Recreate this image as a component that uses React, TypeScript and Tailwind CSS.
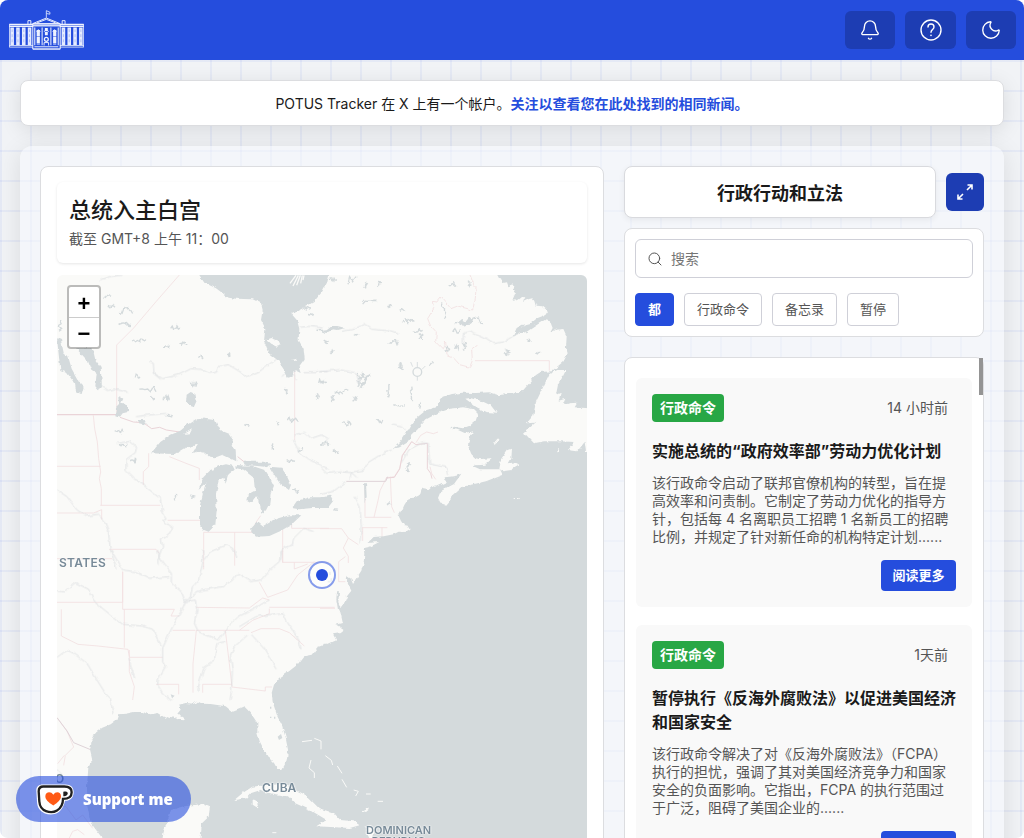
import { Bell, Moon, Search } from "lucide-react";

const FILTERS = [
  { label: "都", active: true },
  { label: "行政命令", active: false },
  { label: "备忘录", active: false },
  { label: "暂停", active: false },
];

const ACTIONS = [
  {
    id: "workforce",
    type: "行政命令",
    time: "14 小时前",
    title: "实施总统的“政府效率部”劳动力优化计划",
    body: "该行政命令启动了联邦官僚机构的转型，旨在提高效率和问责制。它制定了劳动力优化的指导方针，包括每 4 名离职员工招聘 1 名新员工的招聘比例，并规定了针对新任命的机构特定计划......",
  },
  {
    id: "fcpa",
    type: "行政命令",
    time: "1天前",
    title: "暂停执行《反海外腐败法》以促进美国经济和国家安全",
    body: "该行政命令解决了对《反海外腐败法》（FCPA）执行的担忧，强调了其对美国经济竞争力和国家安全的负面影响。它指出，FCPA 的执行范围过于广泛，阻碍了美国企业的......",
  },
];

// small lakes: x, y, width, height in map units
const LAKES = [
  [145, 75, 20, 12], [155, 105, 22, 10], [192, 112, 38, 20], [188, 158, 34, 16], [232, 206, 38, 10],
  [344, 166, 28, 14], [374, 216, 20, 8], [324, 226, 16, 8], [424, 256, 18, 8], [516, 250, 8, 10],
  [238, 312, 14, 12], [250, 350, 50, 16], [404, 336, 20, 12], [320, 376, 20, 14], [286, 376, 10, 14],
  [190, 512, 24, 16], [226, 566, 14, 12], [176, 476, 26, 16], [406, 672, 10, 18], [354, 674, 8, 14],
  [330, 434, 18, 8], [686, 358, 8, 12], [694, 438, 30, 16], [662, 456, 8, 10], [692, 568, 28, 8],
  [724, 530, 16, 14], [776, 370, 14, 18], [788, 326, 18, 14], [744, 110, 20, 8], [756, 130, 14, 6],
  [646, 520, 5, 20], [714, 656, 12, 14], [566, 462, 14, 8], [780, 176, 26, 14], [4, 150, 14, 34],
  [820, 20, 22, 14], [876, 20, 28, 20], [926, 36, 10, 16], [962, 34, 16, 16], [920, 90, 44, 14],
  [992, 102, 12, 10], [1032, 116, 14, 12], [1038, 142, 34, 16], [1070, 176, 30, 14], [1088, 190, 14, 18],
  [998, 206, 30, 26], [806, 210, 12, 12], [822, 240, 10, 8], [898, 190, 6, 6], [1178, 38, 22, 12],
  [1234, 32, 10, 16], [1236, 140, 46, 26], [1196, 150, 34, 18], [1156, 100, 14, 46], [1190, 174, 20, 16],
  [1170, 228, 14, 16], [1196, 226, 16, 12], [1220, 216, 12, 26], [1028, 280, 12, 16], [1120, 276, 12, 14],
  [1060, 350, 14, 46], [1012, 402, 34, 14], [994, 342, 8, 40], [1090, 396, 8, 20], [906, 310, 40, 22],
  [902, 330, 18, 20], [860, 350, 20, 16], [828, 376, 12, 16], [796, 330, 16, 10], [858, 450, 28, 18],
  [960, 448, 20, 14], [796, 510, 24, 20], [834, 540, 14, 12], [1048, 592, 8, 16],
  [1056, 578, 8, 12], [990, 698, 12, 8], [1204, 670, 8, 6], [832, 716, 14, 6], [1414, 208, 8, 8],
  [1440, 244, 12, 8], [836, 366, 24, 8], [890, 380, 12, 14], [1344, 236, 16, 18],
];

// irregular zigzag inside the lake's box, stable for a given index
function lakePath(lake: number[], i: number) {
  const [x, y, w, h] = lake;
  let seed = i * 7919 + 13;
  const next = () => {
    seed = (seed * 16807) % 2147483647;
    return (seed % 1000) / 1000;
  };
  const points = Array.from({ length: 7 }, (_, n) =>
    w > h ? [x + (w * n) / 6, y + h * next()] : [x + w * next(), y + (h * n) / 6],
  );
  return "M" + points.map((p) => `${p[0].toFixed(1)} ${p[1].toFixed(1)}`).join("L");
}

function Logo() {
  const bays = [26, 44, 62, 80, 185, 203, 221, 239];
  return (
    <svg viewBox="24 28 231 124" className="h-10 w-[77px]" fill="none" stroke="#eef2ff" aria-hidden="true">
      <path d="M139 52V30l11 5v6l-10-2" strokeWidth="2.5" />
      <path d="M24 73h74M181 73h74M24 79h74M181 79h74" strokeWidth="4" />
      <path d="M24 138h74M181 138h74M24 143h74M181 143h74M25 72v71M254 72v71" strokeWidth="2.5" />
      <path d="M82 72V61h9v11M188 72V61h9v11M97 70l42-17 42 17zM110 68l29-11 29 11M97 70v79h85V70M97 149h85" strokeWidth="3" />
      <path d="M97 76h85" strokeWidth="7" opacity="0.85" />
      {bays.map((x) => (
        <g key={x}>
          <path d={`M${x + 7} 82v55`} stroke="#e6ecff" strokeWidth="11" />
          <path d={`M${x + 7} 88v8M${x + 7} 103v9M${x + 7} 119v9`} stroke="#aebff6" strokeWidth="3" />
        </g>
      ))}
      <path d="M103 82v55M176 82v55M126 82v55M153 82v55" strokeWidth="4" opacity="0.8" />
      <path d="M114 90v46M165 90v46" strokeWidth="10" strokeDasharray="20 2" />
      <path d="M139 84v22" strokeWidth="9" strokeDasharray="10 2" />
      <path d="M109 96q5-14 11 0M159 96q5-14 11 0M132 96q7-14 14 0" strokeWidth="2.5" />
      <circle cx="139" cy="119" r="6" strokeWidth="4" />
      <path d="M132 138v-9h14v9M102 142h74" strokeWidth="3" />
    </svg>
  );
}

function HelpIcon() {
  return (
    <svg viewBox="0 0 24 24" className="size-6" fill="none" stroke="currentColor" strokeWidth="1.4" strokeLinecap="round" strokeLinejoin="round" aria-hidden="true">
      <circle cx="12" cy="12" r="10" />
      <path d="M9 9a3 3 0 0 1 6 0c0 2.4-3 2.6-3 5.2" />
      <path d="M12 17.4v.1" strokeWidth="1.6" />
    </svg>
  );
}

function ExpandIcon() {
  return (
    <svg viewBox="0 0 16 16" className="size-4" fill="none" stroke="white" strokeWidth="1.6" aria-hidden="true">
      <path d="M10.500 1h4.500v4.500M15 1L10 6M5.500 15H1v-4.500M1 15l5-5" />
    </svg>
  );
}

function CupIcon() {
  return (
    <svg viewBox="106 68 114 98" className="h-[33px] w-[38px]" aria-hidden="true">
      <path d="M126 72h68c17 0 25 9 25 23 0 15-10 26-26 26-3 15-9 28-22 36-10 6-25 7-38 2-15-6-23-18-24-35l-2-35c0-10 7-17 19-17z" fill="white" />
      <path d="M128 78h63c14 0 22 5 22 17s-9 20-26 20c0 15-6 28-18 35-8 5-22 6-33 2-13-5-19-15-20-29l-2-31c0-9 5-14 14-14z" fill="white" stroke="#202020" strokeWidth="7" />
      <path d="M188 94c10-3 14 0 13 6-1 5-6 8-13 7z" fill="#202020" />
      <path d="M158 135c-15-10-24-18-24-28 0-13 17-16 24-4 7-12 23-9 23 4 0 10-9 18-23 28z" fill="#ff5a16" />
    </svg>
  );
}

function MapTiles() {
  return (
    <svg viewBox="3 15 1590 1800" preserveAspectRatio="xMinYMin slice" className="block h-[600px] w-full" aria-hidden="true">
      <defs>
        <filter id="coast" filterUnits="userSpaceOnUse" x="-20" y="-20" width="2000" height="1880" colorInterpolationFilters="sRGB">
          <feTurbulence type="fractalNoise" baseFrequency="0.06" numOctaves="2" seed="4" />
          <feDisplacementMap in="SourceGraphic" scale="12" xChannelSelector="R" yChannelSelector="G" />
        </filter>
        <filter id="stream" filterUnits="userSpaceOnUse" x="-20" y="-20" width="2000" height="1880" colorInterpolationFilters="sRGB">
          <feTurbulence type="fractalNoise" baseFrequency="0.05" numOctaves="2" seed="9" />
          <feDisplacementMap in="SourceGraphic" scale="12" xChannelSelector="R" yChannelSelector="G" />
        </filter>
      </defs>
      <rect x="0" y="0" width="3000" height="1830" fill="#fafaf8" />

      {/* state and country lines */}
      <g fill="none" stroke="#f2e0e1" strokeWidth="2.5">
        <path d="M370 15L300 95 232 175 182 225V432M112 436l4 40 8 40 4 50 6 40-4 20 6 30v50M3 589h131M3 729h110l24-10v30M133 706h180M335 751h108M443 787v50M443 787h145M536 787v100M160 838h140l10 12M278 550v40l-16 15v40M340 560l50 20 40 15v35M680 778v100M707 740v35h112M586 787l14-30 14-20" />
        <path d="M3 866h165M443 838v60" />
        <path d="M716 300v210" />
        <g transform="translate(792 0)">
          <path filter="url(#stream)" d="M450 15l10 25 8 10-2 35-8 35-45-12-20 8-30-35-12 15-14-2 4 22-18 30 8 20 18 20-2 30 20 20 10-20 4 40 20 8 18 20 30 8 8-20-2-35 15-12" />
          <path d="M465 272h223v30" />
          <path d="M288 518l14-22 18-10 20 5 14-5M275 515l-28 40-8 40-16 25-24 4M330 590l5 20 12 18M200 622l-20 40-6 30-12 50M211 620l4 90 8 18M134 742h80M127 773h75M186 773v30M128 773v40M135 640v100M0 776h65l20 28 30 20M85 804l-15 30 15 25 0 20" />
        </g>
        <g transform="translate(0 840)">
          <path d="M3 157h197V65M200 65v113h155l-10 20h25M205 178v115M16 178v80l50 25 60 5 90 10 4 22M220 322h100M220 300v65l15 45-5 40M350 241h68M300 403h68v30M421 241l-10 100v87M420 172l160 2M420 241h160M508 241l12 100 8 70M440 403h88M440 403v25M528 411l100 12v-12h20M580 174l40-30 20 6M640 172H836M550 241l40-30 50-20v-15M585 248l30-12h55l30 12 45 40M680 0v37h140M610 97l25 45 60-22 30-45 50-40M715 37v20l40-15M3 503l30 40 20 48-25 25-5 30M25 616l-20 25" />
          <path d="M792 175h45M848 35v60h20M848 35l20-15M345 810l40-15 50-25M375 800l20 35M40 864l10-20 15-5 20 15M0 760l30 10 30 40 20-15 30 40" />
        </g>
      </g>
      <g fill="none" stroke="#ead4d8" strokeWidth="3">
        <path d="M3 434h177" strokeWidth="4" />
        <path d="M192 442l40 14 30 2 25 18 24-4 20 8 40 6M545 560l20 16" />
        <path d="M1067 515l-28 42-8 40-16 25-24 2M1067 515l13 9 34-4v76l10 14 4 16" />
        <path d="M871 634h118l6-14M3 1343l30 40 20 35 58 24" stroke="#dfd3d8" />
      </g>

      {/* rivers */}
      <g fill="none" stroke="#dcdfe1" strokeWidth="2.5" strokeLinejoin="round" filter="url(#stream)">
        <path d="M280 275l12 5 2 30 26 16 50-12 35-18 30 2 25 12 22-4 5-16 30-6 30 18 26 18 40-18 30-22 42-26M134 30l28-10 38-5M314 328l-24-20M240 440l40-5 50-5M182 520l40-6 20 16-4 18-28 20v34l25 25 30 15M262 645l50 40 8 40 10 20-10 6 30 22-14 24-20 12 4 20-14 38 0 15M3 660l30 20 30 40 30 18 32-5 20 20 12 30 6 55 20 60M712 510l20 40 20 15 40 20 27 12M730 172l30-3 40 5M742 305h70M716 495l30-8 20 18 30-10 20 10M443 870l20-25 50-20 20 10 10 30M675 870l4-35 30-10 4-20 30-30 30 10M135 350l20 12 20-5 40 10M678 320l10-12h24l6 22" />
        <g transform="translate(792 0)">
          <path d="M0 305l60-6 50 10 6 30M65 184l30-5 40-16 20 15 50 4 30 10M430 230v-40l20-5 50 24 20 12 30-5 50-30M215 462l30 6 12 12M215 540l-30 12-40 25-15 24-35 5-5 20M0 590l20 20 45-4 30 2 15 14M0 674l40-10 40-30M325 522l4 60 50 10 4 20M105 680l15 30 4 60-4 50M328 522l-20-4-40 20-24 40" />
        </g>
        <g transform="translate(0 840)">
          <path d="M165 0l35 60 40 5 40 20 60-5M305 0l6 25 35 45v30l30 25 12 30-8 20-30 55-15 30-15 35v40l8 15-20 35-3 20 15 25 28 20M675 0l-5 35-30 25-25 30-30 5-40-25-15 20-30 20-60 10-20 5-10 15-24 12M440 0v40l-12 50-18 20-10 45M388 155l30-5 5 30-8 40 12 25 60 25 30-40 30-30 50-25 40-25M3 122l20 4 35-28 40 20 20 40 50 40 32 25 60 5 30 10 20 40 8 10M3 322l30-22 20 10 40 30 30 50 25 40 15 15 8 45M508 275l-25 5-8 50-30 20-15 50-5 25M575 255l-40 35-12 30 6 40-2 60-5 30M585 252l40 45 35 60M550 230l50-30 80-12 15 30 35 55 5 25M218 325l18 60" />
          <path d="M0 656l20 20M120 785h30" />
        </g>
      </g>

      <g filter="url(#coast)">
        {/* ocean */}
        <path
          fill="#d4dadc"
          d="M1327 15l6 12 6-4 2 16 12-2 4 12 16-6-3 14 10 8-8 18 2 9 14-3 10-8 10 1-7 14 18-9 10-2 6 8 4 14 20 2 17 14-8 12-25 10-22 18-18 4-18 25 26-6 30-20 25-16 16 4 8 20-8 15 18-10 22-2 10 22-2 35 5 16-12 24-24 20-12 10-33 2-15 10-18 22-22 26-14 5-55 6-30-8-40 2-40-1-35 4-25 8-12 17-8 14-30 10-25 20-22 26-15 26-15 22-20 20 18-3 22-14 14-22 18-18 26-30 36-20 36-12 38-4 30 5 15 15-7 20-18 15-20 8-30-5-8 6 23 4 20 9 25-5-10 18-5 25 10 25 15 15 15 8-25 15-25 17-25 10-20 3-15 2 3 15-23 10-8 4-10-4-10 10-20-4-7 22-16 8-17 2-13 20-7 16-10 17 7 15 8 12 18 3-3-10-7 3 10 17-13 8-20-1-15 8-30 6-30 2-15 14-15 16 2 22-2 24-7 25-13 20-12 17-5-12-15-10 5 25 10 20-13 17-12 28-6 8-8-18 2-30-6 0-2 22 5 30 10 17 5 23-20 5 18 12-3 13-25 4 10 18-30 13h-7l-20 8-17 22-23 5-20 25-25 20-30 20-15 20-7 25 4 30 13 40 15 30 10 35 7 35-4 35-13 23h-15l-10-18-15-15-15-25-13-25-7-25v-30l-20-30-20-20-20 8-17 7-18-15-20-3-25-4-25-1-15-7-10 7-25-2-20 5 5 15-10 12 15 8 8 12-12-1-21-11-15 9-15-7-20-12-20 4-25-7h-25l-25 5-20 2-5 15-20 15-25 10-20 15-12 25-5 25 7 30-12 25-4 55 1 60 10 50 30 40 20 50v40H3000V-15H1320z"
        />
        {/* hudson bay and the great lakes */}
        <g fill="#d4dadc">
          <path d="M420 0l25 38 35 17 38 28 22 3 50 2 25 12 5 20-5 30 13 25-4 38 16 38 25 20 20 30 12 22 12-4 8-18 17 8-6-18 18-25-3-30-15-25 2-35-7-25-17-20 32-15 35-20 25-30 16-30 6-25z" />
          <path d="M792 0h27l-12 43-18 18zM60 235h50l8 34 16 22 4 60-10 10-10-12 4-40-16-10-10-25z" />
          <path d="M3 205l12 5 8 38 14 14 10 34 22 40 14 14-6 22-16-4-4-26-24-34-20-8z" />
          <path d="M285 550l28-34 32-22 28-12 24-20 28-18 52 6 14 30 30 12 10 14-4 22 12 14 2 32-25-12-16-8-20 8-20-2-14-12-20-4-16 6 16-26-40 10-30 18-26-1z" />
          <path d="M428 656l14-34 24-24 4 4-12 30zM446 650l14-32 20-28 30-7 20 4 6 12-20 16-8 26-6-18-14 8-8 40 2 50-4 44-20 20-14-5-12-15 0-60z" />
          <path d="M538 585l50 2 40 14 14 22 12 24-10 24-4 30-10 20-14 10-6-42-10-10-14 18-12-6 5-18 18-10-4-40-30-24-24-6zM640 590l36 3 14 20 15 32-6 15-28-20-16-26zM562 575h60l24 8-20 7-60-6z" />
          <path d="M586 775l18-20 16 14 30-18 50-15 36 0-30 28-34 20-32 14-40 2-14-14zM708 714l14-20 40-12 57 0v32l-50 0-40 4zM792 682l30-8 10 18-14 18-26 4z" />
          <path d="M392 374l12-8 14 6 4 20-8 18-16-4-8-14zM190 378l12 8-6 12 20 8v20l-16 4-8 10-14-6 2-20 12-12zM244 450l22 0 6 14-20-4zM792 180l20-2 12-10 20 0 24 6-22 6-14-2-16 8-24-2z" />
          <path d="M1370 200l12-26 22-12-8 18zM1204 158l14-10 12 6 10-12 8 10-6 12-18 2zM916 342l14-22 14-10-20 34-14 12zM1052 800l6-16 4 12zM924 640l6 0 2 40-6 20z" />
        </g>
        <g fill="none" stroke="#d4dadc" strokeWidth="4">
          {LAKES.map((lake, i) => (
            <path key={i} d={lakePath(lake, i)} />
          ))}
        </g>

        {/* islands */}
        <g fill="#fafaf8">
          <path d="M630 210l16-6 22 8 6 14-14 4-14-6zM384 492l24-14-6 12zM708 270l14-4-4 8z" />
          <path d="M1228 386l14-2 36 10 26 12 18 22-30-2-30-14zM1236 536l10 24 24 8 40-4-22 20-30 2-16-14-12-14zM1314 520l10-14 8 0-10 10-6 10z" />
          <path d="M1214 614l10-22 18-8 30 14 60 0 8 16-50 20-70 16-30 28-22 26-14-4-8-16 8-20 40-22z" />
          <path d="M1330 596l6-30 16-24 16-6-2 30-8 14 26-4 2 12-20 12-26 4z" />
          <path d="M1404 488l16-14 18-16-26 2 20-24 8-40 24-50 16-34 24-12 26 0-10 20-14 24-6 30 14-6-6 24 20-6-8 20 20-6 24-2-8 14 58 4 4 130-28 0-4-30-22 28-28-4 20-24-42-2-50 0-30 6z" />
          <path d="M904 832l20-12 46-4-28 14-34 8zM896 838l10-6 0 6zM1376 684h12v3h-12zM1504 534h5v10h-5z" />
          <path d="M535 1590l24-20 30-20 40-5 40-5 20 5 60 30 40 40 46 15 18 20 40 4 18 12-30 8-100-5 30-20-50-30-45-20-20-20-60-10-20-10-30 10-14 16zM590 1590l20 10-8 12-12-8z" />
          <path d="M345 1620l45-12 50-6 22 8-4 30-20 20-6 60-10 100-120 0 20-130zM925 1670l20-4 10 10-10 40zM915 1625l12-6 8-12 4 12-12 10z" />
        </g>
      </g>
      <path d="M720 16l-18 24M727 16l-16 32M733 16l-11 30M739 16l-5 24M744 16l-3 14" stroke="#fafaf8" strokeWidth="4" />
      <circle cx="1084" cy="306" r="13" fill="none" stroke="#d4dadc" strokeWidth="4" />
      <path d="M1070 290l-6-14M1084 292v-16M1098 298l10-10M1084 320v12" stroke="#d4dadc" strokeWidth="2.5" />
      <g fill="none" stroke="#fafaf8" strokeWidth="3">
        <path d="M738 1415l30-4M775 1405l20 8v25M765 1470l-6 24 16 14v16M808 1457l18 14 4 14M844 1488l14 22M858 1528l14 24M893 1560l14 4-8 14M930 1572h14M965 1594h16M649 1688h12M848 1018l6 18-8 16M1315 520l10-12" />
      </g>
      <path d="M665 1400l10-8 4 12-10 6zM344 1273l12 4-8 8zM642 1310h4v6h-4zM654 1340h4v6h-4zM642 1340h4v4h-4z" fill="#d4dadc" />
      <path d="M822 905v10M826 925v10M815 935h8" stroke="#d4dadc" strokeWidth="5" />
    </svg>
  );
}

function MapPanel() {
  return (
    <section className="min-w-0 rounded-lg border border-[#dcdde0] bg-white p-4 pt-[15px]">
      <div className="rounded-md p-3 shadow-[0_1px_3px_rgba(0,0,0,0.1)]">
        <h2 className="text-[22px] leading-8 font-medium text-[#1a1a1a]">总统入主白宫</h2>
        <p className="text-sm leading-[25px] text-[#555]">截至 GMT+8 上午 11：00</p>
      </div>
      <div className="relative mt-3 overflow-hidden rounded-md">
        <MapTiles />
        <div className="absolute top-[10px] left-[10px] flex w-[34px] flex-col overflow-hidden rounded-sm border-2 border-black/25 bg-white bg-clip-padding font-['Liberation_Sans',sans-serif] text-[22px] font-bold text-black">
          <button aria-label="Zoom in" className="flex h-[31px] items-center justify-center border-b border-[#ccc] pt-0.5">
            <span aria-hidden="true">+</span>
          </button>
          <button aria-label="Zoom out" className="flex h-[29px] items-center justify-center pt-0.5">
            <span aria-hidden="true">−</span>
          </button>
        </div>
        <span className="absolute top-[286px] left-[251px] flex size-7 items-center justify-center rounded-full border-2 border-[#254ddd]/55 bg-white/60">
          <span className="size-3 rounded-full bg-[#254ddd]" />
        </span>
        <span className="absolute top-[280px] left-[2px] text-[12px] leading-4 font-semibold tracking-wide text-[#778a98] [text-shadow:0_0_2px_#fff]">STATES</span>
        <span className="absolute top-[505px] left-[205px] text-[12px] leading-4 font-semibold text-[#778a98] [text-shadow:0_0_2px_#fff,0_0_2px_#fff]">CUBA</span>
        <span className="absolute top-[550px] left-[309px] text-center text-[11px] leading-[11px] font-semibold text-[#778a98] [text-shadow:0_0_2px_#fff,0_0_2px_#fff]">
          DOMINICAN
          <br />
          REPUBLIC
        </span>
        <span className="absolute top-[496px] -left-[2px] text-[12px] leading-4 font-semibold text-[#778a98]">O</span>
      </div>
    </section>
  );
}

function ActionCard({ action }: { action: (typeof ACTIONS)[number] }) {
  return (
    <article className="rounded-md bg-[#f9f9f9] p-4">
      <div className="flex items-center justify-between pr-2">
        <span className="rounded bg-[#28a745] px-2 text-sm leading-7 font-bold text-white">{action.type}</span>
        <time className="text-sm text-[#555]">{action.time}</time>
      </div>
      <h3 className="mt-[17px] text-base leading-6 font-bold text-[#1a1a1a]">{action.title}</h3>
      <p className="mt-[11px] text-sm leading-[18px] text-[#555]">{action.body}</p>
      <div className="mt-[14px] flex justify-end">
        <button className="h-[31px] w-[75px] rounded bg-[#254ddd] text-[13px] font-bold whitespace-nowrap text-white">阅读更多</button>
      </div>
    </article>
  );
}

function ActionsPanel() {
  return (
    <section className="min-w-0">
      <div className="flex items-center gap-[10px]">
        <h2 className="flex-1 rounded-lg border border-[#d9dade] bg-white pt-[13px] pb-[9px] text-center text-lg leading-7 font-bold text-[#1a1a1a] shadow-[0_2px_6px_rgba(0,0,0,0.06)]">
          行政行动和立法
        </h2>
        <button aria-label="展开" className="flex size-[38px] items-center justify-center rounded-md bg-[#1d3db3]">
          <ExpandIcon />
        </button>
      </div>

      <div className="mt-[10px] rounded-lg border border-[#dcdde0] bg-white p-[10px]">
        <div className="relative">
          <Search size={16} strokeWidth={1.5} className="absolute top-3 left-3 text-[#555]" />
          <input
            type="text"
            aria-label="搜索"
            placeholder="搜索"
            className="h-[39px] w-full rounded-md border border-[#cfd0d8] bg-white pl-[35px] text-sm placeholder:text-[#757575]"
          />
        </div>
        <div className="mt-[15px] flex gap-[10px]">
          {FILTERS.map((filter) => (
            <button
              key={filter.label}
              className={
                filter.active
                  ? "h-[33px] rounded border border-[#254ddd] bg-[#254ddd] px-3 text-[13px] font-bold text-white"
                  : "h-[33px] rounded border border-[#cfd0d8] bg-white px-3 text-[13px] text-[#555]"
              }
            >
              {filter.label}
            </button>
          ))}
        </div>
      </div>

      <div className="relative mt-5 rounded-lg border border-[#dcdde0] bg-white px-[11px] pt-5 pb-5">
        <div className="flex flex-col gap-[18px]">
          {ACTIONS.map((action) => (
            <ActionCard key={action.id} action={action} />
          ))}
        </div>
        <span className="absolute top-0 right-0 h-[37px] w-1 bg-[#949494]" />
      </div>
    </section>
  );
}

export default function App() {
  return (
    <div className="h-screen overflow-hidden rounded-lg bg-[#f1f3f6] font-['Inter','Noto_Sans_CJK_SC',sans-serif] text-[#1a1a1a]">
      <header className="flex h-[60px] items-center justify-between bg-[#254ddd] px-2">
        <a href="#" aria-label="POTUS Tracker">
          <Logo />
        </a>
        <nav className="flex gap-[10px] text-white">
          <button aria-label="Notifications" className="flex h-[38px] w-[50px] items-center justify-center rounded-md bg-[#1d3db3]">
            <Bell size={22} strokeWidth={1.5} />
          </button>
          <button aria-label="Help" className="flex h-[38px] w-[51px] items-center justify-center rounded-md bg-[#1d3db3]">
            <HelpIcon />
          </button>
          <button aria-label="Dark mode" className="flex h-[38px] w-[50px] items-center justify-center rounded-md bg-[#1d3db3]">
            <Moon size={22} strokeWidth={1.5} />
          </button>
        </nav>
      </header>

      <div className="bg-[linear-gradient(rgba(37,77,221,0.06)_2px,transparent_2px),linear-gradient(90deg,rgba(37,77,221,0.06)_2px,transparent_2px)] bg-[size:30px_30px] px-5 pt-5 pb-10">
        <p className="rounded-lg border border-[#dcdde0] bg-white pt-[13px] pb-[11px] text-center text-sm shadow-[0_4px_20px_rgba(0,0,0,0.1)]">
          POTUS Tracker 在 X 上有一个帐户。
          <a href="#" className="font-bold text-[#254ddd]">关注以查看您在此处找到的相同新闻。</a>
        </p>

        <main className="mt-5 grid grid-cols-[minmax(0,1fr)_360px] gap-5 rounded-xl bg-[#f8f9fd]/50 p-5 shadow-[0_4px_24px_rgba(0,0,0,0.1)]">
          <MapPanel />
          <ActionsPanel />
        </main>
      </div>

      <button className="fixed bottom-4 left-4 flex h-[46px] w-[175px] items-center gap-[9px] rounded-full bg-[#254ddd]/60 pl-5 font-['Open_Sans',sans-serif] text-[15px] font-extrabold text-white">
        <CupIcon />
        Support me
      </button>
    </div>
  );
}
